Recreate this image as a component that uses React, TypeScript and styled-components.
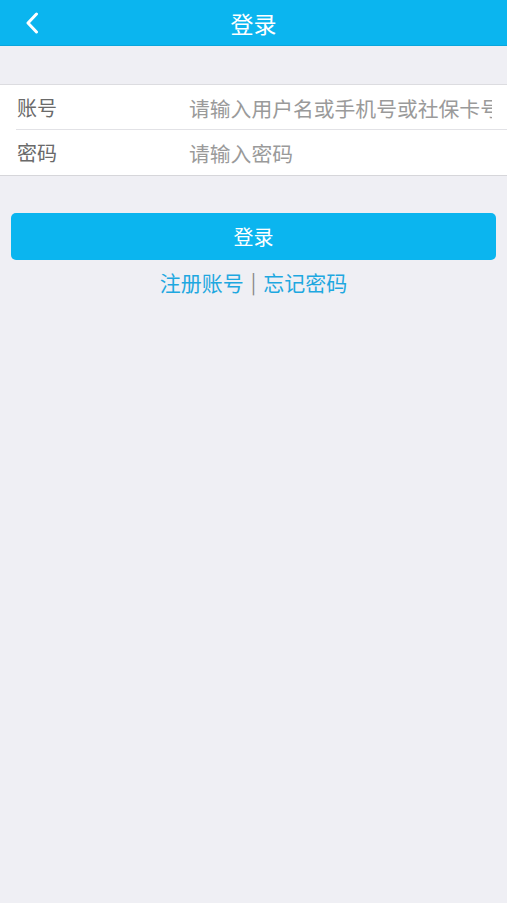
import React from "react";
import styled, { createGlobalStyle } from "styled-components";

const GlobalStyle = createGlobalStyle`
  html, body {
    margin: 0;
    padding: 0;
    background: #efeff4;
    font-family: "Noto Sans CJK SC", "Noto Sans", sans-serif;
  }
  * { box-sizing: border-box; }
`;

const Page = styled.div`
  min-height: 903px;
  background: #efeff4;
  display: flex;
  flex-direction: column;
`;

const NavBar = styled.header`
  height: 46px;
  background: #0bb5ef;
  border-bottom: 1px solid #0aa6dc;
  display: grid;
  grid-template-columns: 60px 1fr 60px;
  align-items: center;
`;

const BackButton = styled.button`
  width: 50px;
  height: 44px;
  padding: 0 0 0 25px;
  border: none;
  background: transparent;
  display: flex;
  align-items: center;
  cursor: pointer;
`;

const Title = styled.h1`
  margin: 0;
  text-align: center;
  color: #ffffff;
  font-size: 23px;
  font-weight: 400;
  line-height: 44px;
`;

const Form = styled.div`
  margin-top: 38px;
  background: #ffffff;
  border-top: 1px solid #dcdce0;
  border-bottom: 1px solid #d6d6da;
`;

const Row = styled.div`
  height: 45px;
  display: flex;
  align-items: center;
  padding-left: 17px;
  position: relative;
`;

const DividerRow = styled(Row)`
  &::after {
    content: "";
    position: absolute;
    left: 16px;
    right: 0;
    bottom: 0;
    height: 1px;
    background: #e2e2e6;
  }
`;

const Label = styled.span`
  width: 172px;
  flex: none;
  color: #6a6a6a;
  font-size: 20px;
  line-height: 28px;
`;

const Field = styled.input`
  flex: 1;
  min-width: 0;
  margin-right: 15px;
  border: none;
  outline: none;
  background: transparent;
  font-family: inherit;
  font-size: 20.8px;
  color: #333;
  padding: 0;
  &::placeholder {
    color: #9a9a9a;
  }
`;

const Actions = styled.div`
  padding: 37px 11px 0;
  display: flex;
  flex-direction: column;
  align-items: stretch;
`;

const SubmitButton = styled.button`
  height: 47px;
  border: none;
  border-radius: 5px;
  background: #0bb5ef;
  color: #ffffff;
  font-family: inherit;
  font-size: 20px;
  cursor: pointer;
`;

const Links = styled.div`
  margin-top: 7px;
  display: flex;
  justify-content: center;
  align-items: center;
  font-size: 21px;
  line-height: 30px;
`;

const TextLink = styled.a`
  color: #1ea8e0;
  text-decoration: none;
`;

const Sep = styled.span`
  color: #888888;
  margin: 0 7px;
  font-size: 20px;
`;

export default function App() {
  return (
    <Page>
      <GlobalStyle />
      <NavBar>
        <BackButton aria-label="返回">
          <svg width="14" height="22" viewBox="0 0 14 22" fill="none">
            <path
              d="M11.5 2 L3 11 L11.5 20"
              stroke="#ffffff"
              strokeWidth="3"
              strokeLinecap="round"
              strokeLinejoin="round"
            />
          </svg>
        </BackButton>
        <Title>登录</Title>
        <span />
      </NavBar>

      <Form>
        <DividerRow>
          <Label>账号</Label>
          <Field placeholder="请输入用户名或手机号或社保卡号" />
        </DividerRow>
        <Row>
          <Label>密码</Label>
          <Field type="password" placeholder="请输入密码" />
        </Row>
      </Form>

      <Actions>
        <SubmitButton>登录</SubmitButton>
        <Links>
          <TextLink href="#">注册账号</TextLink>
          <Sep>|</Sep>
          <TextLink href="#">忘记密码</TextLink>
        </Links>
      </Actions>
    </Page>
  );
}
